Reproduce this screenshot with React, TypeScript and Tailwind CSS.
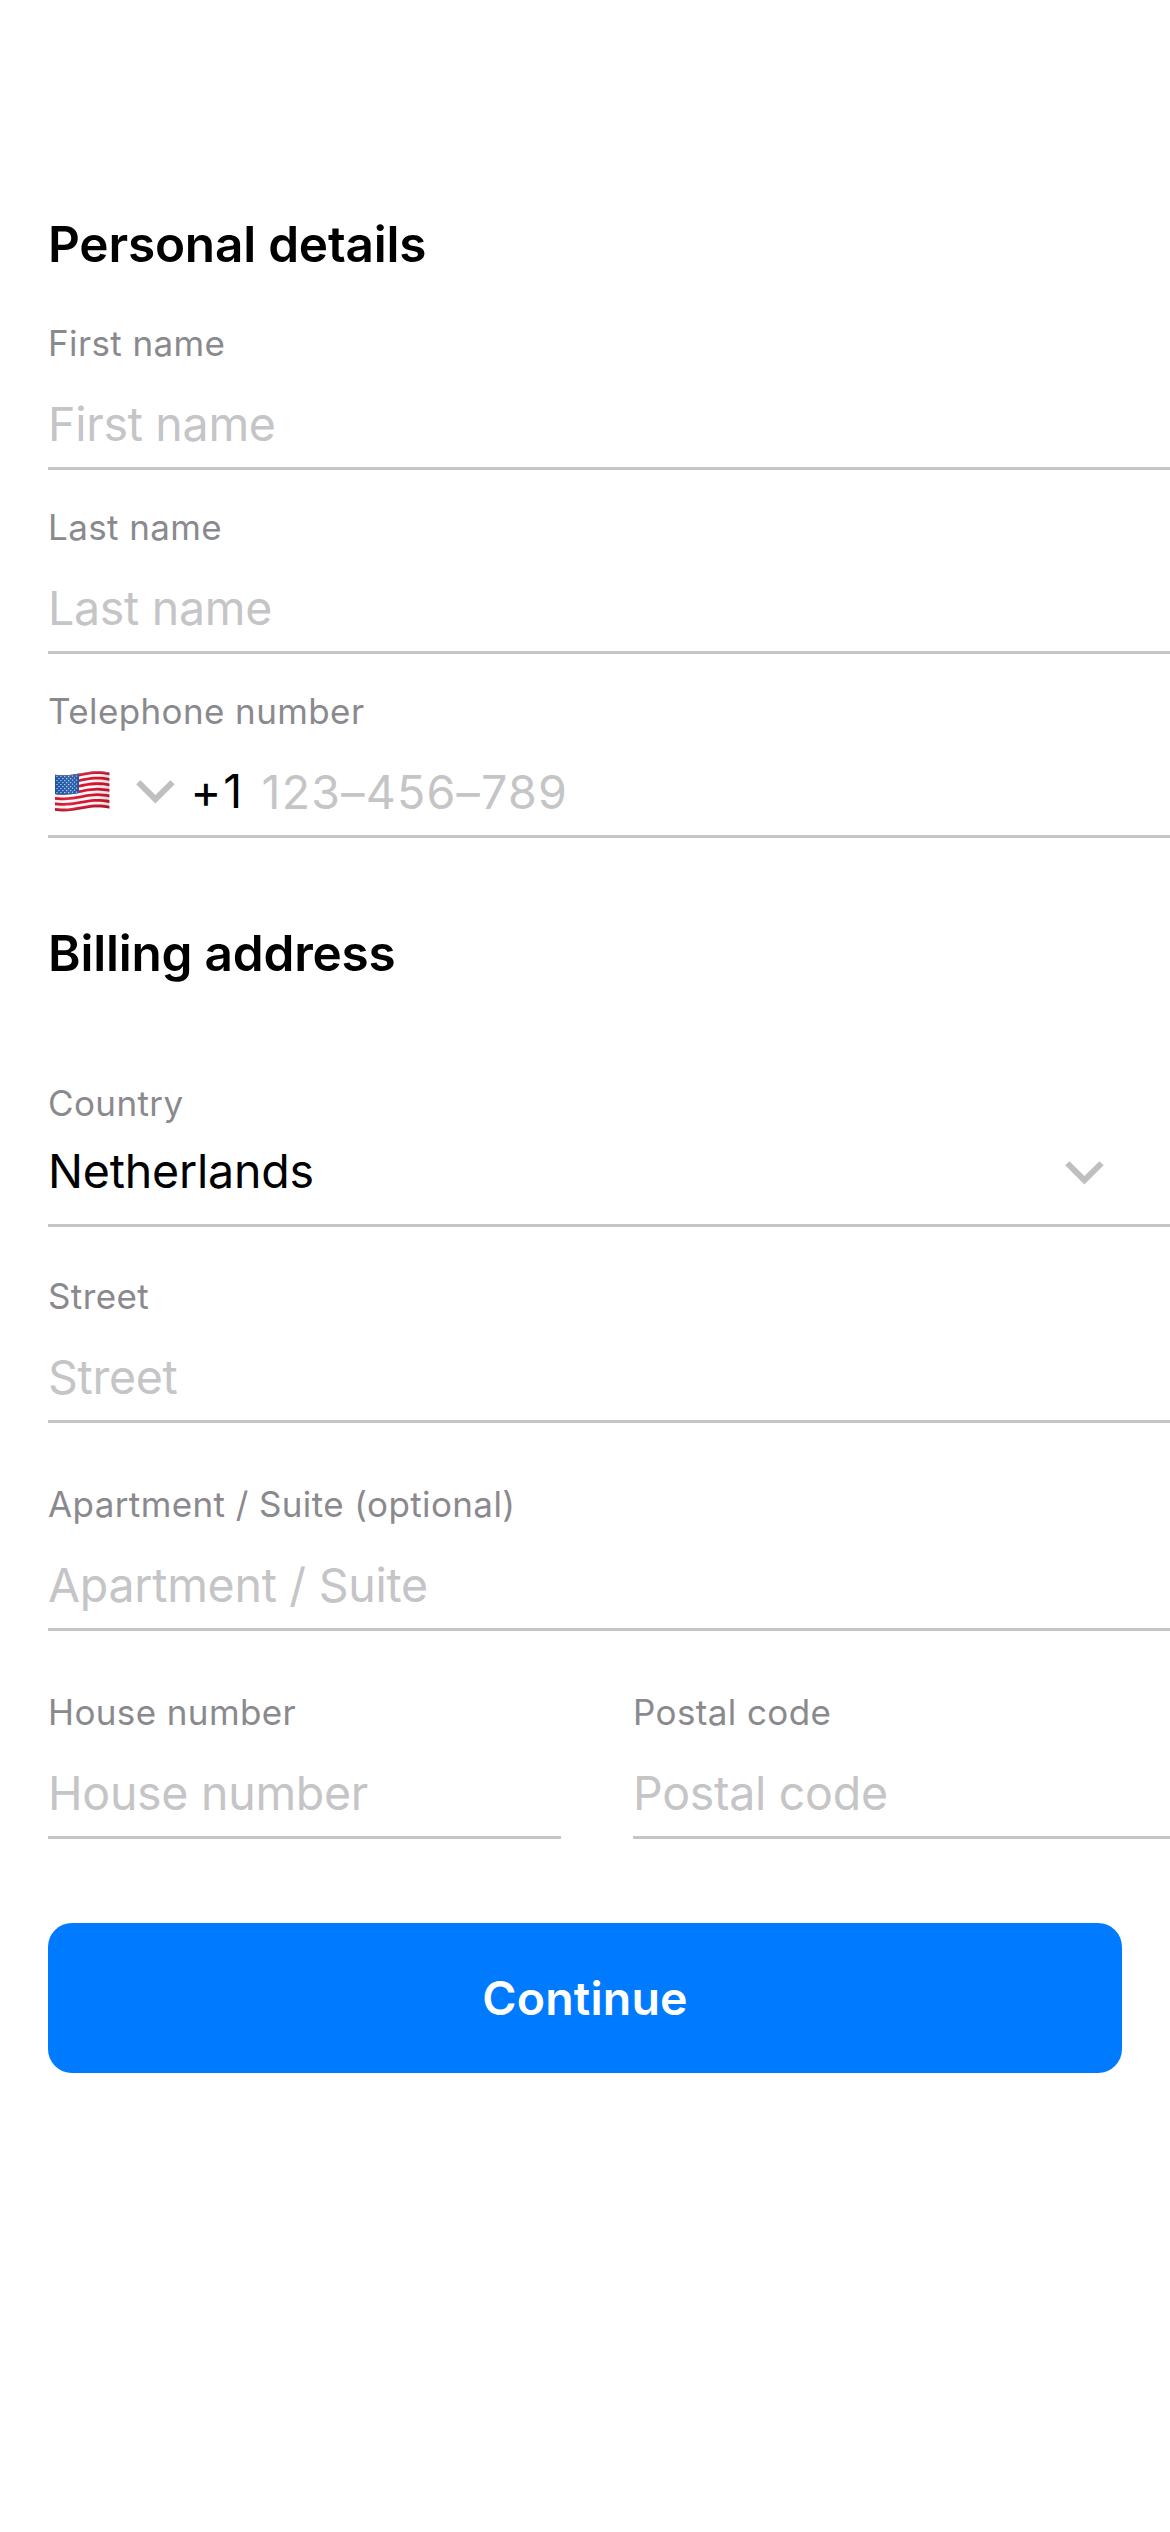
import React from "react";

const FLAG_W = 54.4;
const STRIPE_H = 36 / 13;

// One band of the waving flag: `y` is its top, `h` its height, `w` its width.
function wave(y: number, h: number, w = FLAG_W) {
  const top = (x: number) => y + 2.4 - 2.2 * Math.sin(((x - 27) / 34) * Math.PI + 0.15) * (x < 27 ? 0.85 : 1);
  const xs = Array.from({ length: 19 }, (_, i) => (w * i) / 18);
  const upper = xs.map((x) => `${x.toFixed(2)} ${top(x).toFixed(2)}`);
  const lower = [...xs].reverse().map((x) => `${x.toFixed(2)} ${(top(x) + h).toFixed(2)}`);
  return `M${upper.join("L")}L${lower.join("L")}Z`;
}

const STARS = Array.from({ length: 9 }, (_, row) =>
  Array.from({ length: row % 2 ? 5 : 6 }, (_, col) => ({
    x: 2 + col * 3.9 + (row % 2 ? 1.95 : 0),
    y: 5.6 + row * 2 - (col > 3 ? 0.5 : 0),
  })),
).flat();

function UsFlag() {
  return (
    <svg className="-mt-0.5 h-[41px] w-[55px] shrink-0" viewBox="0 0 55 41" aria-label="United States">
      <defs>
        <linearGradient id="flag-shade" x1="0" y1="0" x2="1" y2="0">
          <stop offset="0" stopColor="#000" stopOpacity="0.06" />
          <stop offset="0.25" stopColor="#fff" stopOpacity="0.08" />
          <stop offset="0.6" stopColor="#000" stopOpacity="0" />
          <stop offset="0.8" stopColor="#000" stopOpacity="0.06" />
          <stop offset="1" stopColor="#000" stopOpacity="0.14" />
        </linearGradient>
      </defs>
      <path d={wave(0, 36)} fill="#fcfcfc" />
      {[0, 2, 4, 6, 8, 10, 12].map((i) => (
        <path key={i} d={wave(i * STRIPE_H, STRIPE_H)} fill="#dc1530" />
      ))}
      <path d={wave(0, STRIPE_H * 7, 24)} fill="#1c57ab" />
      {STARS.map((s, i) => (
        <circle key={i} cx={s.x} cy={s.y} r="0.72" fill="#dce8f8" />
      ))}
      <path d={wave(0, 36)} fill="url(#flag-shade)" />
      <path d={wave(0, 1)} fill="#8c8c8c" fillOpacity="0.45" />
      <path d={wave(35.2, 1)} fill="#5a1a22" fillOpacity="0.4" />
    </svg>
  );
}

function Chevron() {
  return (
    <svg className="h-6 w-[39px] shrink-0" viewBox="0 0 39 24" aria-hidden="true">
      <polygon points="0.2,4.2 4.4,0.2 19.4,14.9 34.4,0.2 38.7,4.2 19.4,23.6" fill="#bfbfbf" />
    </svg>
  );
}

const inputClass =
  "block h-14 w-full bg-transparent p-0 text-[46.5px] leading-[56px] text-black outline-none placeholder:text-[#c5c5c7] placeholder:opacity-100";

function Label({ children }: { children: React.ReactNode }) {
  return (
    <span className="block text-[35px] leading-[42px] tracking-[0.39px] whitespace-nowrap text-[#8a8a8e]">
      {children}
    </span>
  );
}

function Field({ label, placeholder = label }: { label: string; placeholder?: string }) {
  return (
    <label className="block border-b-[3px] border-[#c5c5c7] pb-[15px]">
      <Label>{label}</Label>
      <div className="mt-8">
        <input className={inputClass + " tracking-[-0.28px]"} placeholder={placeholder} />
      </div>
    </label>
  );
}

function Heading({ children }: { children: React.ReactNode }) {
  return (
    <h2 className="text-[49.5px] leading-[60px] font-semibold tracking-[-0.2px] text-black">{children}</h2>
  );
}

export default function App() {
  return (
    <main className="flex h-[2532px] w-[1170px] flex-col overflow-hidden bg-white pt-[214px] pl-12 font-[Inter,sans-serif]">
      <section>
        <Heading>Personal details</Heading>
        <div className="mt-12 flex flex-col gap-9">
          <Field label="First name" />
          <Field label="Last name" />
          <div className="border-b-[3px] border-[#c5c5c7] pb-[15px]">
            <Label>Telephone number</Label>
            <div className="mt-8 flex h-14 items-center">
              <button type="button" className="flex items-center gap-[26px] pl-[6.5px]">
                <UsFlag />
                <Chevron />
              </button>
              <span className="-mt-0.5 ml-4 w-[71px] text-[46.5px] leading-[56px] tracking-[1.9px]">+1</span>
              <div className="flex-1">
                <input className={inputClass + " tracking-[1.24px]"} placeholder="123–456–789" />
              </div>
            </div>
          </div>
        </div>
      </section>

      <section className="mt-[85px]">
        <Heading>Billing address</Heading>
        <div className="mt-[99px] border-b-[3px] border-[#c5c5c7] pb-[25px]">
          <Label>Country</Label>
          <div className="mt-[19px] flex items-center justify-between pr-[66px]">
            <span className="text-[46.5px] leading-[56px] tracking-[-0.2px] text-black">Netherlands</span>
            <div className="pt-[3px]">
              <Chevron />
            </div>
          </div>
        </div>
        <div className="mt-12 flex flex-col gap-[60px]">
          <Field label="Street" />
          <Field label="Apartment / Suite (optional)" placeholder="Apartment / Suite" />
          <div className="grid grid-cols-[513px_1fr] gap-[72px]">
            <Field label="House number" />
            <Field label="Postal code" />
          </div>
        </div>
      </section>

      <button
        type="button"
        className="mt-[84px] mr-12 h-[150px] shrink-0 rounded-3xl bg-[#007aff] text-[46.5px] leading-[56px] font-semibold tracking-[0.18px] text-white"
      >
        Continue
      </button>
    </main>
  );
}
